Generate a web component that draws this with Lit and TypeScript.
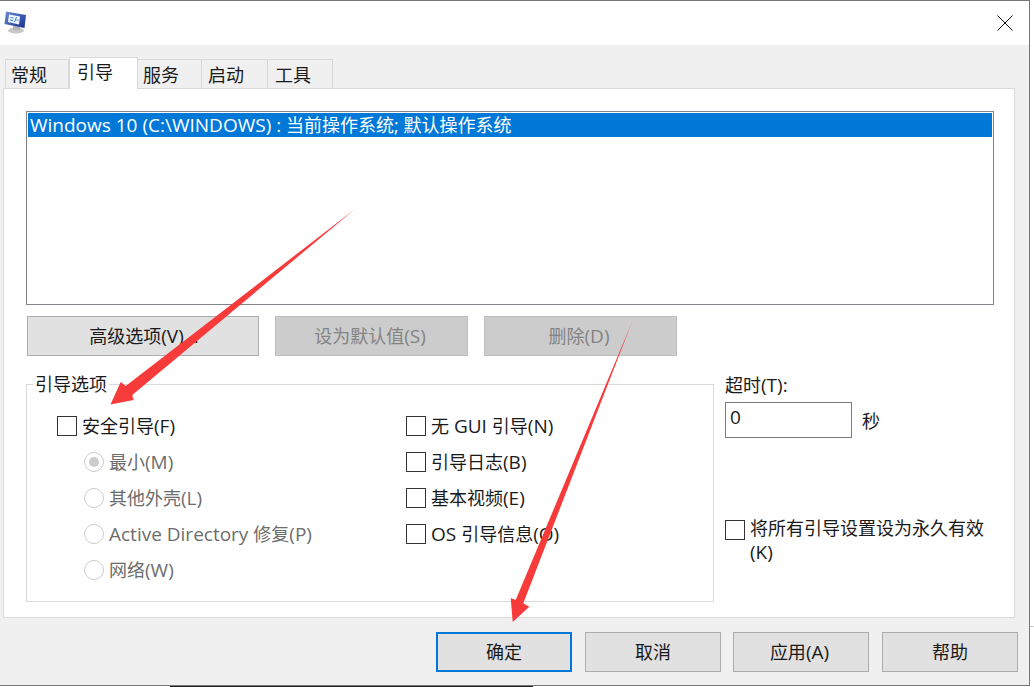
import { LitElement, html, css, svg } from "lit";
import { customElement } from "lit/decorators.js";

const L = (s: string) => html`<span class="l">${s}</span>`;

@customElement("app-root")
export class AppRoot extends LitElement {
  static styles = css`
    :host { display: block; width: 1034px; height: 687px; font-family: "Open Sans", "Noto Sans CJK SC", sans-serif; font-size: 18px; color: #1a1a1a; }
    * { box-sizing: border-box; }
    .l { font-size: 19px; }
    .page { width: 1034px; height: 687px; background: #fff; position: relative; overflow: hidden; }
    .window { width: 1030px; height: 686px; border-top: 1px solid #777; border-right: 1px solid #777; border-bottom: 1px solid #777; background: #f0f0f0; display: flex; flex-direction: column; }
    .title { height: 44px; background: #fff; display: flex; justify-content: space-between; align-items: center; flex: none; }
    .title .ic { margin: -1px 0 0 4px; }
    .title .x { margin: -1px 16px 0 0; }
    .tabs { height: 43px; display: flex; align-items: flex-end; padding-left: 5px; flex: none; position: relative; z-index: 1; }
    .tab { height: 29px; border: 1px solid #d9d9d9; border-bottom: none; border-left: none; display: flex; align-items: center; padding: 1px 0 0 5px; line-height: 1; }
    .tab:first-child { border-left: 1px solid #d9d9d9; }
    .tab.on { height: 32px; background: #fff; border-left: 1px solid #d9d9d9; margin-bottom: -1px; padding: 0 0 3px 7px; }
    .tab.start { padding-left: 6px; }
    .tab.last { padding-left: 7px; }
    .panel { margin-left: 3px; width: 1012px; height: 530px; background: #fff; border: 1px solid #d9d9d9; padding: 22px 20px 15px 22px; display: flex; flex-direction: column; flex: none; }
    .list { width: 968px; height: 194px; border: 1px solid #82828c; padding: 1px; flex: none; }
    .sel { height: 24px; background: #0078d7; color: #fff; padding-left: 2px; line-height: 24px; white-space: nowrap; }
    .btnrow { display: flex; gap: 16px; margin-top: 11px; padding-left: 1px; flex: none; }
    .btn { height: 40px; background: #e1e1e1; border: 1px solid #adadad; display: flex; align-items: center; justify-content: center; padding-bottom: 2px; white-space: pre; }
    .btn.adv { width: 232px; padding-left: 2px; }
    .btn.w193 { width: 193px; padding-right: 3px; }
    .btn.off { background: #ccc; border-color: #bfbfbf; color: #838383; }
    .lower { display: flex; margin-top: 28px; flex: 1; }
    .group { width: 688px; height: 218px; border: 1px solid #d9d9d9; position: relative; padding: 31px 0 0 30px; display: grid; grid-template-columns: 349px 1fr; flex: none; }
    .legend { position: absolute; left: 6px; top: -11px; background: #fff; padding: 0 2px; line-height: 20px; }
    .row { display: flex; align-items: center; gap: 5px; height: 20px; white-space: pre; line-height: 20px; margin-bottom: 16px; }
    .cb { width: 20px; height: 20px; border: 1px solid #333; background: #fff; flex: none; }
    .col { display: flex; flex-direction: column; }
    .radio { width: 20px; height: 20px; border: 1px solid #ccc; border-radius: 50%; flex: none; display: flex; align-items: center; justify-content: center; }
    .radio.on::after { content: ""; width: 10px; height: 10px; border-radius: 50%; background: #ccc; }
    .sub { margin-left: 27px; color: #6d6d6d; }
    .side { margin-left: 11px; display: flex; flex-direction: column; width: 264px; }
    .lab { margin-top: -9px; line-height: 20px; }
    .tm { display: flex; align-items: center; gap: 10px; margin-top: 7px; }
    .input { width: 127px; height: 36px; border: 1px solid #7a7a7a; padding: 0 4px 5px; line-height: 28px; }
    .perm { display: flex; gap: 5px; margin-top: 78px; line-height: 24px; }
    .perm .cb { margin-top: 4px; }
    .foot { display: flex; justify-content: flex-end; gap: 13px; padding: 14px 11px 0 0; flex: none; }
    .foot .btn { width: 136px; }
    .foot .btn:nth-child(3) { margin-left: -1px; padding-right: 3px; }
    .foot .ok { border: 2px solid #0078d7; }
    .arrows { position: absolute; left: 0; top: 0; pointer-events: none; }
    .strip { position: absolute; left: 170px; width: 363px; bottom: 0; height: 1px; background: #222; }
    .edge { position: absolute; left: 1030px; width: 4px; top: 626px; height: 1px; background: #ccc; }
  `;

  private arrows() {
    return svg`
      <polygon fill="#f73b3b" points="355,209 125.7,386 120.7,382 110.5,404.5 133.5,400 132.3,395"/>
      <polygon fill="#f73b3b" points="632,322 515.7,600 510.7,598 512.7,622 529.3,606.7 523.3,603.3"/>`;
  }

  render() {
    return html`
      <div class="page">
        <div class="window">
          <div class="title">
            <svg class="ic" width="23" height="23" viewBox="0 0 23 23">
              <defs>
                <linearGradient id="m" x1="0" y1="0" x2="1" y2="1"><stop offset="0" stop-color="#6f8fd6"/><stop offset="1" stop-color="#12308f"/></linearGradient>
              </defs>
              <ellipse cx="12" cy="19.5" rx="8" ry="3" fill="#c8c8c8"/>
              <rect x="9" y="14" width="7" height="5" fill="#b4b4b4"/>
              <polygon points="2,0.5 22,4 20.5,17 0.5,13" fill="url(#m)"/>
              <polygon points="5,3.5 16,5.5 15,13.5 4,11" fill="#eef5fc"/>
              <path d="M6.5 6.5l3 .5M6 9l3 .5M10.5 11l2-5M12.5 9l2 .3" stroke="#2f7fd0" stroke-width="1" fill="none"/>
            </svg>
            <svg class="x" width="16" height="16" viewBox="0 0 16 16"><path d="M.5.5l15 15M15.5.5l-15 15" stroke="#111" stroke-width="1" fill="none"/></svg>
          </div>
          <div class="tabs">
            <div class="tab" style="width:64px">常规</div>
            <div class="tab on" style="width:69px">引导</div>
            <div class="tab" style="width:64px">服务</div>
            <div class="tab start" style="width:66px">启动</div>
            <div class="tab last" style="width:65px">工具</div>
          </div>
          <div class="panel">
            <div class="list"><div class="sel">${L("Windows 10 (C:\\WINDOWS) : ")}当前操作系统; 默认操作系统</div></div>
            <div class="btnrow">
              <div class="btn adv"><span>高级选项${L("(V)...")}</span></div>
              <div class="btn w193 off"><span>设为默认值${L("(S)")}</span></div>
              <div class="btn w193 off"><span>删除${L("(D)")}</span></div>
            </div>
            <div class="lower">
              <div class="group">
                <div class="legend">引导选项</div>
                <div class="col">
                  <div class="row"><span class="cb"></span><span>安全引导${L("(F)")}</span></div>
                  <div class="row sub"><span class="radio on"></span><span>最小${L("(M)")}</span></div>
                  <div class="row sub"><span class="radio"></span><span>其他外壳${L("(L)")}</span></div>
                  <div class="row sub"><span class="radio"></span><span>${L("Active Directory ")}修复${L("(P)")}</span></div>
                  <div class="row sub"><span class="radio"></span><span>网络${L("(W)")}</span></div>
                </div>
                <div class="col">
                  <div class="row"><span class="cb"></span><span>无${L(" GUI ")}引导${L("(N)")}</span></div>
                  <div class="row"><span class="cb"></span><span>引导日志${L("(B)")}</span></div>
                  <div class="row"><span class="cb"></span><span>基本视频${L("(E)")}</span></div>
                  <div class="row"><span class="cb"></span><span>${L("OS ")}引导信息${L("(O)")}</span></div>
                </div>
              </div>
              <div class="side">
                <div class="lab">超时${L("(T):")}</div>
                <div class="tm"><div class="input">${L("0")}</div><span>秒</span></div>
                <div class="perm"><span class="cb"></span><span>将所有引导设置设为永久有效${L("(K)")}</span></div>
              </div>
            </div>
          </div>
          <div class="foot">
            <div class="btn ok">确定</div>
            <div class="btn">取消</div>
            <div class="btn"><span>应用${L("(A)")}</span></div>
            <div class="btn">帮助</div>
          </div>
        </div>
        <div class="strip"></div>
        <div class="edge"></div>
        <svg class="arrows" width="1034" height="687" viewBox="0 0 1034 687">${this.arrows()}</svg>
      </div>
    `;
  }
}
